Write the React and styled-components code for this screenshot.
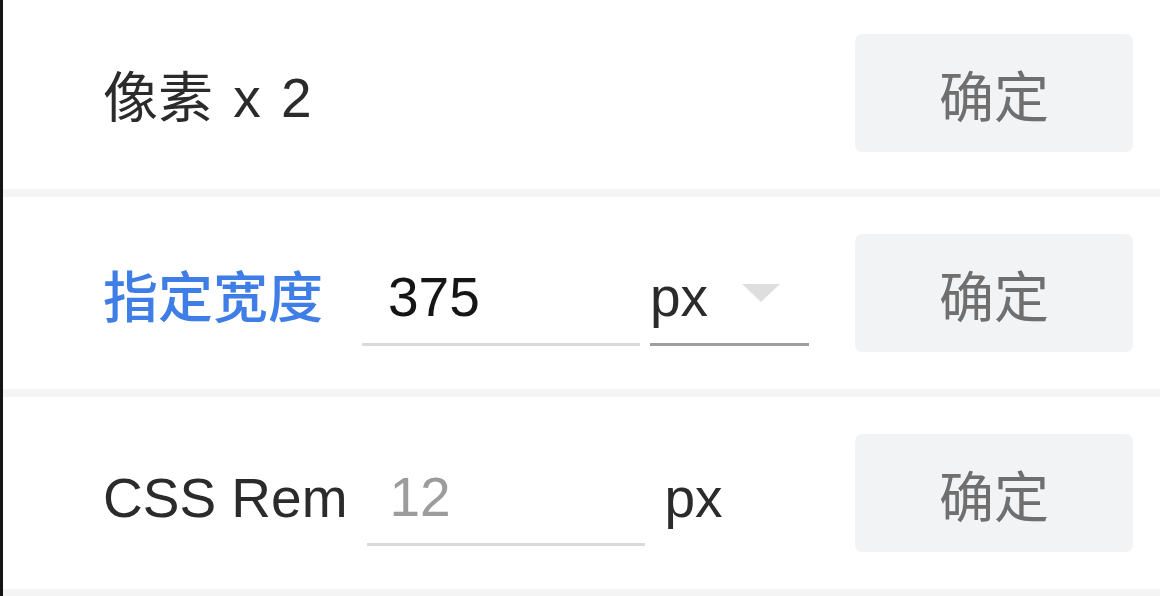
import React from "react";
import styled, { createGlobalStyle } from "styled-components";

const GlobalStyle = createGlobalStyle`
  html, body {
    margin: 0;
    padding: 0;
    background: #fff;
    overflow: hidden;
  }
  body {
    font-family: "Liberation Sans", "Noto Sans CJK SC", sans-serif;
  }
`;

const Panel = styled.div`
  width: 1160px;
  height: 596px;
  box-sizing: border-box;
  border-left: 3px solid #141414;
  overflow: hidden;
`;

const List = styled.div`
  margin-top: -3px;
`;

const Row = styled.div`
  height: 200px;
  box-sizing: border-box;
  display: flex;
  align-items: center;
  padding: 0 27px 0 100px;
  border-bottom: 8px solid #f4f4f5;
  font-size: 55px;
  color: #2b2b2b;
`;

const Label = styled.span`
  color: ${(p) => (p.active ? "#3f7ee6" : "#2b2b2b")};
  font-weight: ${(p) => (p.active ? 500 : 400)};
  margin-right: ${(p) => p.gap || 0}px;
  margin-top: ${(p) => (p.lower ? 10 : 0)}px;
  word-spacing: ${(p) => (p.spaced ? 5 : 0)}px;
  white-space: nowrap;
`;

const TextInput = styled.input`
  width: 278px;
  height: 96px;
  box-sizing: border-box;
  border: none;
  border-bottom: 3px solid #dadada;
  outline: none;
  background: transparent;
  padding: 0 0 0 ${(p) => p.indent || 26}px;
  margin-top: 10px;
  font-family: inherit;
  font-size: 55px;
  color: #151515;
  &::placeholder {
    color: #9c9c9c;
  }
`;

const UnitSelect = styled.div`
  width: 159px;
  height: 96px;
  box-sizing: border-box;
  margin: 10px 0 0 10px;
  border-bottom: 3px solid #9e9e9e;
  display: flex;
  align-items: center;
  color: #2b2b2b;
`;

const Caret = styled.span`
  width: 0;
  height: 0;
  margin: 0 0 8px 34px;
  border-left: 19px solid transparent;
  border-right: 19px solid transparent;
  border-top: 18px solid #dedede;
`;

const Unit = styled.span`
  margin-left: 20px;
  margin-top: ${(p) => (p.lower ? 10 : 0)}px;
  color: #2b2b2b;
`;

const Spacer = styled.div`
  flex: 1;
`;

const ConfirmButton = styled.button`
  width: 278px;
  height: 118px;
  border: none;
  border-radius: 7px;
  background: #f2f3f5;
  color: #6f6f6f;
  font-family: inherit;
  font-size: 55px;
  cursor: pointer;
`;

export default function App() {
  return (
    <Panel>
      <GlobalStyle />
      <List>
        <Row>
          <Label spaced>像素 x 2</Label>
          <Spacer />
          <ConfirmButton>确定</ConfirmButton>
        </Row>
        <Row>
          <Label active gap={39}>指定宽度</Label>
          <TextInput defaultValue="375" />
          <UnitSelect>
            px
            <Caret />
          </UnitSelect>
          <Spacer />
          <ConfirmButton>确定</ConfirmButton>
        </Row>
        <Row>
          <Label lower gap={19}>CSS Rem</Label>
          <TextInput indent={23} placeholder="12" />
          <Unit lower>px</Unit>
          <Spacer />
          <ConfirmButton>确定</ConfirmButton>
        </Row>
      </List>
    </Panel>
  );
}
